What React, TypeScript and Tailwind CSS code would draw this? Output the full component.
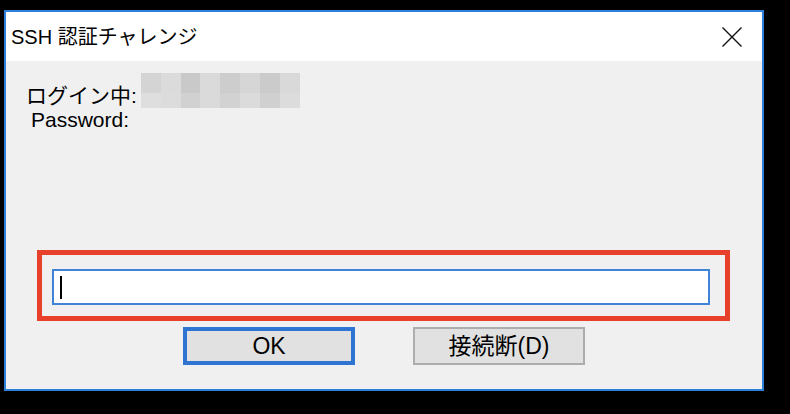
const font = "font-['Liberation_Sans','Noto_Sans_CJK_JP',sans-serif]"

const maskCells = [
  'bg-[#d4d4d4]', 'bg-[#dbdbdb]', 'bg-[#c9c9c9]', 'bg-[#dadada]', 'bg-[#cdcdcd]', 'bg-[#d6d6d6]', 'bg-[#cbcbcb]', 'bg-[#d9d9d9]',
  'bg-[#dedede]', 'bg-[#dcdcdc]', 'bg-[#d1d1d1]', 'bg-[#dadada]', 'bg-[#d2d2d2]', 'bg-[#dbdbdb]', 'bg-[#d0d0d0]', 'bg-[#dcdcdc]',
]

function CloseIcon() {
  return (
    <svg width="20" height="20" viewBox="0 0 20 20" aria-hidden="true">
      <path d="M0.5 0.5 L19.5 19.5 M19.5 0.5 L0.5 19.5" stroke="#111" strokeWidth="1.4" fill="none" />
    </svg>
  )
}

export default function App() {
  return (
    <div className={`h-[414px] w-[790px] overflow-hidden bg-black pt-[10px] pl-[4px] ${font}`}>
      <div className="flex h-[381px] w-[760px] flex-col border-2 border-[#2e7fd8] bg-[#f0f0f0]">
        {/* title bar */}
        <header className="flex h-[49px] items-center justify-between bg-white pl-[5px] pr-[20px]">
          <h1 className="text-[20px] leading-[28px] text-black">SSH 認証チャレンジ</h1>
          <CloseIcon />
        </header>

        <main className="flex flex-1 flex-col px-[20px] pt-[12px] pb-[24px] text-[21px] leading-[24px] text-black">
          <div className="flex items-end">
            <span>ログイン中:</span>
            <div className="ml-[4px] grid h-[35px] w-[159px] grid-cols-8 grid-rows-[20px_15px]">
              {maskCells.map((c, i) => (
                <span key={i} className={c} />
              ))}
            </div>
          </div>
          <p className="pl-[5px]">Password:</p>

          <div className="mt-auto ml-[11px] mr-[12px] border-[5px] border-[#e8412b] pt-[14px] pr-[15px] pb-[11px] pl-[10px]">
            <div className="flex h-[36px] items-center border-2 border-[#3f84d8] bg-white pl-[6px]">
              <span className="h-[23px] w-[2px] bg-black" />
            </div>
          </div>

          <div className="mt-[6px] flex justify-center gap-[58px] text-[23px]">
            <button type="button" className="h-[38px] w-[172px] border-4 border-[#2f73d3] bg-[#e1e1e1] text-black">
              OK
            </button>
            <button type="button" className="h-[38px] w-[172px] border-2 border-[#adadad] bg-[#e1e1e1] text-black">
              接続断(D)
            </button>
          </div>
        </main>
      </div>
    </div>
  )
}
